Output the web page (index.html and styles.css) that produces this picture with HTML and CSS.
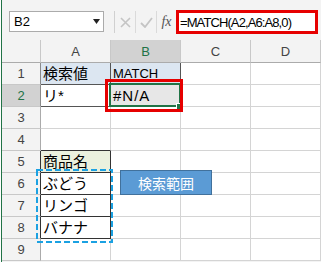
FILE: index.html
```html
<!DOCTYPE html>
<html lang="ja">
<head>
    <meta charset="UTF-8">
    <title>MATCH</title>
    <link rel="stylesheet" href="styles.css">
</head>
<body>
    <div class="app">
        <!-- 数式バー -->
        <div class="toolbar">
            <div class="name-box">
                <span>B2</span>
                <svg width="7" height="5" viewBox="0 0 7 5"><path d="M0 0h7L3.5 5z" fill="#222"/></svg>
            </div>
            <div class="fx-buttons">
                <span class="fx-btn">
                    <svg width="11" height="11" viewBox="0 0 11 11"><path d="M1 1l9 9M10 1l-9 9" stroke="#c4c4c4" stroke-width="1.6" fill="none"/></svg>
                </span>
                <span class="fx-btn">
                    <svg width="13" height="11" viewBox="0 0 13 11"><path d="M1 6l4 4 7-9" stroke="#c4c4c4" stroke-width="1.8" fill="none"/></svg>
                </span>
                <span class="fx-btn fx-label">fx</span>
            </div>
            <div class="formula">=MATCH(A2,A6:A8,0)</div>
        </div>

        <!-- シート -->
        <div class="sheet">
            <div class="corner"></div>
            <div class="col-head">A</div>
            <div class="col-head sel">B</div>
            <div class="col-head">C</div>
            <div class="col-head">D</div>

            <div class="row-head edge">1</div>
            <div class="cell fill-blue line jp">検索値</div>
            <div class="cell fill-blue line">MATCH</div>
            <div class="cell"></div>
            <div class="cell"></div>

            <div class="row-head sel edge">2</div>
            <div class="cell line jp">リ*</div>
            <div class="cell fill-gray line na">#N/A</div>
            <div class="cell"></div>
            <div class="cell"></div>

            <div class="row-head">3</div>
            <div class="cell"></div>
            <div class="cell"></div>
            <div class="cell"></div>
            <div class="cell"></div>

            <div class="row-head">4</div>
            <div class="cell line-bottom"></div>
            <div class="cell"></div>
            <div class="cell"></div>
            <div class="cell"></div>

            <div class="row-head dark">5</div>
            <div class="cell fill-green dark-line jp">商品名</div>
            <div class="cell"></div>
            <div class="cell"></div>
            <div class="cell"></div>

            <div class="row-head dark">6</div>
            <div class="cell dark-line jp">ぶどう</div>
            <div class="cell"></div>
            <div class="cell"></div>
            <div class="cell"></div>

            <div class="row-head dark">7</div>
            <div class="cell dark-line jp">リンゴ</div>
            <div class="cell"></div>
            <div class="cell"></div>
            <div class="cell"></div>

            <div class="row-head dark">8</div>
            <div class="cell dark-line jp">バナナ</div>
            <div class="cell"></div>
            <div class="cell"></div>
            <div class="cell"></div>

            <div class="row-head">9</div>
            <div class="cell"></div>
            <div class="cell"></div>
            <div class="cell"></div>
            <div class="cell"></div>

            <!-- 重ねる要素 -->
            <div class="selection"></div>
            <div class="fill-handle"></div>
            <div class="red-frame"></div>
            <svg class="marquee" width="77" height="74" viewBox="0 0 77 74">
                <rect x="1" y="1" width="75" height="72" fill="none" stroke="#1ba1e2" stroke-width="2" stroke-dasharray="6 3"/>
            </svg>
            <div class="range-button">検索範囲</div>
        </div>
    </div>
</body>
</html>
```

FILE: styles.css
```css
* {
    box-sizing: border-box;
    margin: 0;
    padding: 0;
}

body {
    font-family: "Liberation Sans", "Noto Sans CJK JP", sans-serif;
    font-size: 13px;
    color: #000;
    background: #fff;
    width: 321px;
    height: 262px;
    overflow: hidden;
}

.app {
    margin-left: 1px;
    border-left: 1px solid #217346;
    height: 262px;
    background: #f3f3f3;
}

/* 数式バー */
.toolbar {
    height: 40px;
    display: flex;
    align-items: flex-start;
    padding-top: 10px;
}

.name-box {
    margin: 1px 0 0 7px;
    width: 95px;
    height: 21px;
    border: 1px solid #ababab;
    background: #fff;
    display: flex;
    align-items: center;
    justify-content: space-between;
    padding: 0 3px 0 4px;
}

.fx-buttons {
    margin: 1px 0 0 10px;
    display: flex;
    height: 22px;
    border-left: 1px solid #d0d0d0;
}

.fx-btn {
    width: 21px;
    display: flex;
    align-items: center;
    justify-content: center;
    border-right: 1px solid #dadada;
}

.fx-label {
    width: 19px;
    border-right: none;
    font-family: "Liberation Serif", serif;
    font-style: italic;
    font-size: 14px;
    color: #555;
}

.formula {
    width: 142px;
    height: 24px;
    border: 3px solid #e60000;
    background: #fff;
    display: flex;
    align-items: center;
    padding-left: 1px;
    letter-spacing: -0.9px;
    white-space: nowrap;
    overflow: hidden;
}

/* シート */
.sheet {
    position: relative;
    display: grid;
    grid-template-columns: 39px repeat(4, 70px);
    grid-template-rows: 23px repeat(9, 22px);
}

.corner {
    border-right: 1px solid #c8c8c8;
    border-bottom: 1px solid #ababab;
}

.col-head {
    border-right: 1px solid #c8c8c8;
    border-bottom: 1px solid #ababab;
    text-align: center;
    line-height: 22px;
    padding-top: 1px;
    color: #444;
}

.row-head {
    border-right: 1px solid #ababab;
    border-bottom: 1px solid #c8c8c8;
    text-align: center;
    line-height: 21px;
    color: #444;
}

.col-head.sel,
.row-head.sel {
    background: #d2d2d2;
    color: #217346;
}

.row-head.edge {
    border-right-color: #8a8a8a;
}

.row-head.dark {
    border-right-color: #333;
}

.cell {
    background: #fff;
    border-right: 1px solid #d4d4d4;
    border-bottom: 1px solid #d4d4d4;
    padding-left: 2px;
    line-height: 21px;
    white-space: nowrap;
}

.jp {
    font-size: 15px;
}

.na {
    font-size: 15px;
    letter-spacing: 1px;
}

.fill-blue {
    background: #dce6f1;
}

.fill-green {
    background: #ebf1de;
}

.fill-gray {
    background: #e7e7e7;
}

.line {
    border-right-color: #555;
    border-bottom-color: #555;
}

.line-bottom {
    border-bottom-color: #333;
}

.dark-line {
    border-right-color: #333;
    border-bottom-color: #333;
}

/* 重ねる要素 */
.selection {
    position: absolute;
    left: 107px;
    top: 43px;
    width: 72px;
    height: 24px;
    border: 2px solid #217346;
}

.fill-handle {
    position: absolute;
    left: 174px;
    top: 63px;
    width: 7px;
    height: 7px;
    background: #217346;
    border: 1px solid #fff;
}

.red-frame {
    position: absolute;
    left: 103px;
    top: 39px;
    width: 78px;
    height: 33px;
    border: 3px solid #e60000;
}

.marquee {
    position: absolute;
    left: 34px;
    top: 129px;
}

.range-button {
    position: absolute;
    left: 118px;
    top: 130px;
    width: 92px;
    height: 25px;
    background: #5b9bd5;
    border: 1px solid #41719c;
    color: #fff;
    font-size: 14px;
    display: flex;
    align-items: center;
    justify-content: center;
}
```
